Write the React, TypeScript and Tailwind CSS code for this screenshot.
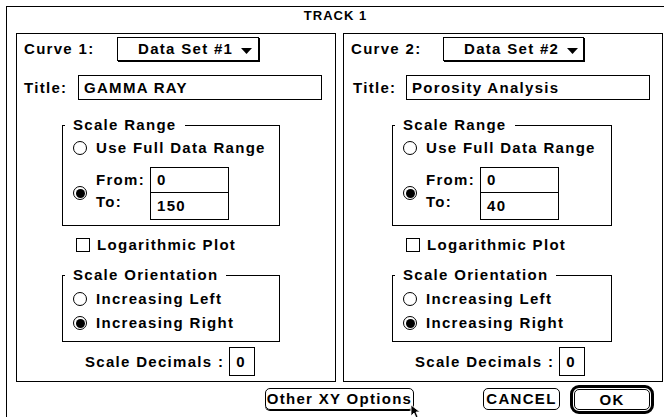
import React from "react";

const FONT = { fontFamily: '"Liberation Sans", Arial, sans-serif' };

function Radio({ on }: { on?: boolean }) {
  return (
    <div className="w-[14px] h-[14px] rounded-full border-[1.5px] border-black flex items-center justify-center shrink-0 bg-white">
      {on && <div className="w-[9px] h-[9px] rounded-full bg-black" />}
    </div>
  );
}

function Popup({ label, w }: { label: string; w: number }) {
  return (
    <div
      className="h-[24px] border border-black shadow-[1px_1px_0_0_#000] bg-white flex items-center pl-[20px] gap-[8px] shrink-0"
      style={{ width: w }}
    >
      <span>{label}</span>
      <svg width="11" height="6" viewBox="0 0 11 6" className="mt-[3px]">
        <polygon points="0,0 11,0 5.5,6" fill="#000" />
      </svg>
    </div>
  );
}

function Group({ title, h, ml, w, children }: { title: string; h: number; ml: number; w: number; children: React.ReactNode }) {
  return (
    <div className="relative border border-black" style={{ height: h, marginLeft: ml, width: w }}>
      <span className="absolute -top-[10px] left-[2px] px-[8px] bg-white leading-[18px]">{title}</span>
      {children}
    </div>
  );
}

function Panel({
  curve,
  data,
  title,
  to,
  labelW,
  titlePl,
  titleLabelW,
  popupW,
  groupMl,
  groupW,
}: {
  curve: string;
  data: string;
  title: string;
  to: string;
  labelW: number;
  titlePl: number;
  titleLabelW: number;
  popupW: number;
  groupMl: number;
  groupW: number;
}) {
  return (
    <div className="w-[320px] h-[349px] border border-black flex flex-col">
      <div className="mt-[3px] h-[24px] flex items-center pl-[7px]">
        <span className="shrink-0" style={{ width: labelW }}>{curve}</span>
        <Popup label={data} w={popupW} />
      </div>
      <div className="mt-[14px] h-[25px] flex items-center" style={{ paddingLeft: titlePl }}>
        <span className="shrink-0" style={{ width: titleLabelW }}>Title:</span>
        <div className="w-[244px] h-[25px] border border-black flex items-center pl-[5px]">{title}</div>
      </div>
      <div className="mt-[25px]">
        <Group title="Scale Range" h={101} ml={groupMl} w={groupW}>
          <div className="pl-[10px] pt-[12px] flex flex-col">
            <div className="h-[20px] flex items-center gap-[9px]">
              <Radio />
              <span>Use Full Data Range</span>
            </div>
            <div className="mt-[9px] flex items-start">
              <div className="mt-[19px]">
                <Radio on />
              </div>
              <div className="ml-[9px] w-[54px] mt-[2px] flex flex-col">
                <span className="h-[22px] leading-[22px]">From:</span>
                <span className="h-[22px] leading-[22px]">To:</span>
              </div>
              <div className="flex flex-col">
                <div className="w-[79px] h-[26px] border border-black flex items-center pl-[6px]">0</div>
                <div className="w-[79px] h-[28px] -mt-[1px] border border-black flex items-center pl-[6px]">{to}</div>
              </div>
            </div>
          </div>
        </Group>
      </div>
      <div className="mt-[9px] h-[20px] flex items-center gap-[7px]" style={{ marginLeft: groupMl + 14 }}>
        <div className="w-[14px] h-[14px] border-[1.5px] border-black" />
        <span>Logarithmic Plot</span>
      </div>
      <div className="mt-[20px]">
        <Group title="Scale Orientation" h={67} ml={groupMl} w={groupW}>
          <div className="pl-[10px] pt-[13px] flex flex-col">
            <div className="h-[20px] flex items-center gap-[9px]">
              <Radio />
              <span>Increasing Left</span>
            </div>
            <div className="mt-[4px] h-[20px] flex items-center gap-[9px]">
              <Radio on />
              <span>Increasing Right</span>
            </div>
          </div>
        </Group>
      </div>
      <div className="mt-[5px] flex items-center gap-[5px]" style={{ marginLeft: groupMl + 23 }}>
        <span>Scale Decimals :</span>
        <div className="w-[26px] h-[29px] border border-black flex items-center pl-[6px]">0</div>
      </div>
    </div>
  );
}

export default function App() {
  return (
    <div
      className="w-[664px] h-[417px] bg-white overflow-hidden relative pl-[6px] pt-[6px] text-black font-bold text-[15px] tracking-[1.3px] leading-[18px]"
      style={FONT}
    >
      <div className="w-[658px] h-[411px] border-l border-t border-black flex flex-col">
        <div className="h-[26px] flex justify-center pt-[1px]">
          <span className="text-[13px] leading-[15px] tracking-[1px]">TRACK 1</span>
        </div>
        <div className="flex gap-[7px] pl-[9px]">
          <Panel
            curve="Curve 1:"
            data="Data Set #1"
            title="GAMMA RAY"
            to="150"
            labelW={93}
            titlePl={7}
            titleLabelW={54}
            popupW={142}
            groupMl={45}
            groupW={218}
          />
          <Panel
            curve="Curve 2:"
            data="Data Set #2"
            title="Porosity Analysis"
            to="40"
            labelW={92}
            titlePl={9}
            titleLabelW={53}
            popupW={141}
            groupMl={48}
            groupW={220}
          />
        </div>
        <div className="flex items-start pl-[258px]">
          <div className="mt-[6px] w-[149px] h-[22px] border border-black rounded-[5px] shadow-[0_1px_0_0_#000] flex items-center justify-center">
            Other XY Options
          </div>
          <div className="ml-[69px] mt-[6px] w-[77px] h-[22px] border border-black rounded-[5px] flex items-center justify-center">
            CANCEL
          </div>
          <div className="ml-[10px] mt-[3px] w-[84px] h-[29px] border-[3px] border-black rounded-[9px] p-[1px]">
            <div className="w-full h-full border border-black rounded-[5px] flex items-center justify-center">OK</div>
          </div>
        </div>
      </div>
      <svg className="absolute left-[410px] top-[405px]" width="12" height="14" viewBox="0 0 12 14">
        <polygon points="1,0 1,11 4,8 6,13 8,12 6,7 10,7" fill="#000" stroke="#fff" strokeWidth="0.8" />
      </svg>
    </div>
  );
}
